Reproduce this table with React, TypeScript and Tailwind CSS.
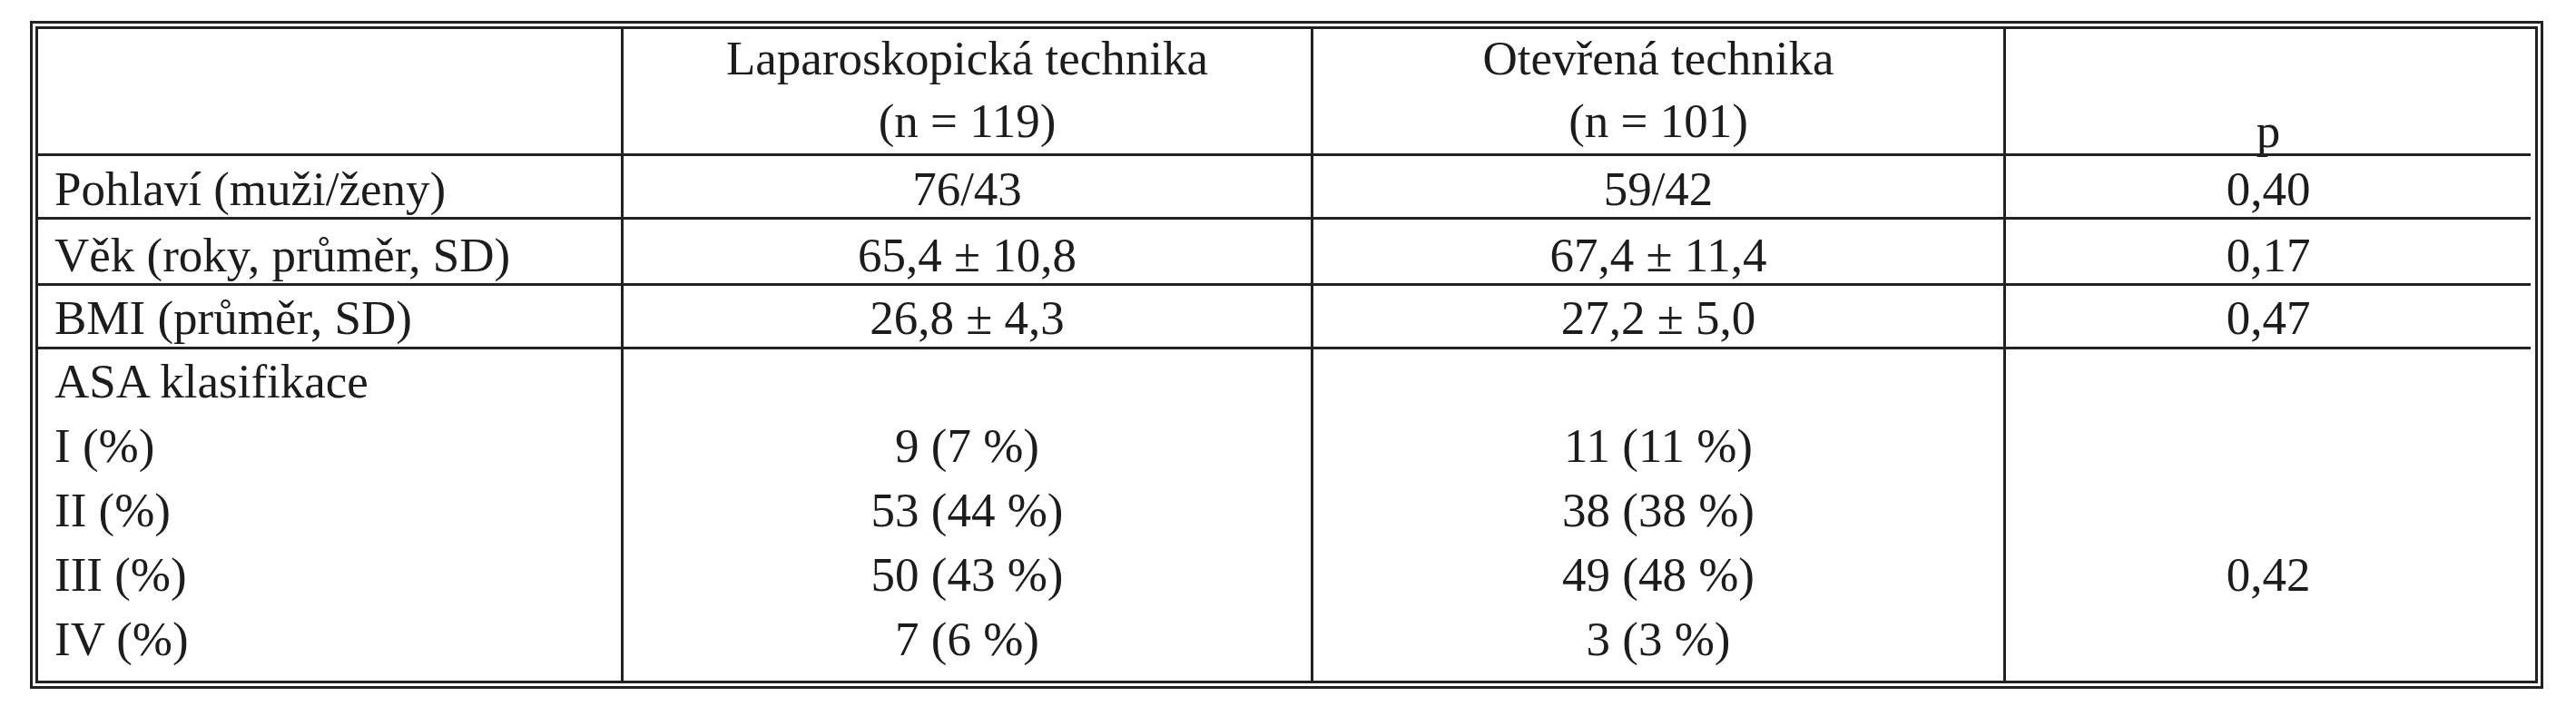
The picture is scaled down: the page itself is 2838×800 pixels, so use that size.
import React from "react";

const rows = [
  { label: "Pohlaví (muži/ženy)", lap: "76/43", open: "59/42", p: "0,40", h: "h-[70px]", pt: "pt-[7px]" },
  { label: "Věk (roky, průměr, SD)", lap: "65,4 ± 10,8", open: "67,4 ± 11,4", p: "0,17", h: "h-[73px]", pt: "pt-[10px]" },
  { label: "BMI (průměr, SD)", lap: "26,8 ± 4,3", open: "27,2 ± 5,0", p: "0,47", h: "h-[70px]", pt: "pt-[6px]" },
];

const asa = [
  { label: "ASA klasifikace", lap: "", open: "", p: "" },
  { label: "I (%)", lap: "9 (7 %)", open: "11 (11 %)", p: "" },
  { label: "II (%)", lap: "53 (44 %)", open: "38 (38 %)", p: "" },
  { label: "III (%)", lap: "50 (43 %)", open: "49 (48 %)", p: "0,42" },
  { label: "IV (%)", lap: "7 (6 %)", open: "3 (3 %)", p: "" },
];

export default function App() {
  return (
    <div className="w-[2838px] h-[800px] bg-white pt-[23px] pl-[33px] font-['Liberation_Serif',serif] text-[53px] text-[#1c1c1c]">
      <div className="w-[2769px] border-[9px] border-double border-[#222]">
        <div className="grid grid-cols-[642px_760px_763px_581px]">
          {/* header */}
          <div className="h-[137px]" />
          <div className="h-[137px] border-l-[3px] border-[#222] text-center">
            <div className="leading-[73px] -mt-1">Laparoskopická technika</div>
            <div className="leading-[73px] -mt-1">(n = 119)</div>
          </div>
          <div className="h-[137px] border-l-[3px] border-[#222] text-center">
            <div className="leading-[73px] -mt-1">Otevřená technika</div>
            <div className="leading-[73px] -mt-1">(n = 101)</div>
          </div>
          <div className="h-[137px] border-l-[3px] border-[#222] flex items-end justify-center">
            <span className="leading-[50px]">p</span>
          </div>

          {rows.map((r) => (
            <React.Fragment key={r.label}>
              <div className={`${r.h} ${r.pt} border-t-[3px] border-[#222] pl-[18px] leading-[58px]`}>{r.label}</div>
              <div className={`${r.h} ${r.pt} border-t-[3px] border-l-[3px] border-[#222] text-center leading-[58px]`}>{r.lap}</div>
              <div className={`${r.h} ${r.pt} border-t-[3px] border-l-[3px] border-[#222] text-center leading-[58px]`}>{r.open}</div>
              <div className={`${r.h} ${r.pt} border-t-[3px] border-l-[3px] border-[#222] text-center leading-[58px]`}>{r.p}</div>
            </React.Fragment>
          ))}

          {/* ASA */}
          <div className="h-[368px] border-t-[3px] border-[#222] pl-[18px]">
            {asa.map((a) => (
              <div key={a.label} className="h-[71px] leading-[71px]">{a.label}</div>
            ))}
          </div>
          <div className="h-[368px] border-t-[3px] border-l-[3px] border-[#222] text-center">
            {asa.map((a) => (
              <div key={a.label} className="h-[71px] leading-[71px]">{a.lap}</div>
            ))}
          </div>
          <div className="h-[368px] border-t-[3px] border-l-[3px] border-[#222] text-center">
            {asa.map((a) => (
              <div key={a.label} className="h-[71px] leading-[71px]">{a.open}</div>
            ))}
          </div>
          <div className="h-[368px] border-t-[3px] border-l-[3px] border-[#222] text-center">
            {asa.map((a) => (
              <div key={a.label} className="h-[71px] leading-[71px]">{a.p}</div>
            ))}
          </div>
        </div>
      </div>
    </div>
  );
}
